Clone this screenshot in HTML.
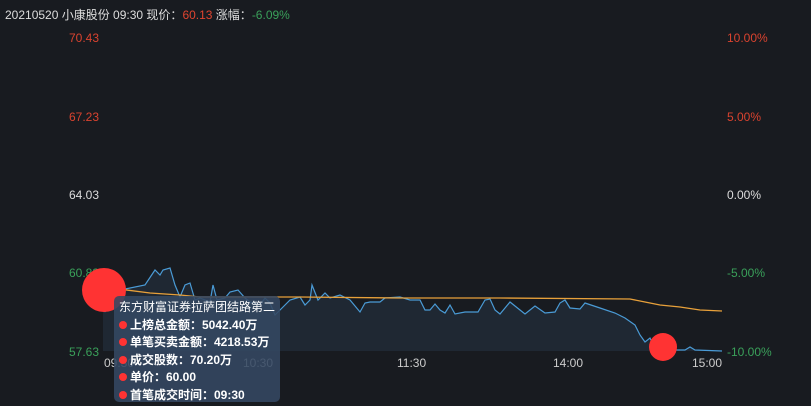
<!DOCTYPE html>
<html><head><meta charset="utf-8"><style>
body{margin:0;background:#181b20;width:811px;height:406px;overflow:hidden;font-family:"Liberation Sans","Noto Sans CJK SC",sans-serif;}
.t{position:absolute;font-size:12px;white-space:nowrap}
.tip{position:absolute;left:114px;top:296px;width:166px;height:106px;background:rgba(52,72,98,0.88);border-radius:5px;color:#fff;font-size:12px;font-weight:bold;line-height:17.5px;padding:3px 0 0 5px;box-sizing:border-box}
.tip span{display:inline-block;width:8px;height:8px;border-radius:50%;background:#ff3333;margin-right:3px}
.tip b{font-weight:normal}
</style></head><body>
<div class="t" style="left:5px;top:6px;color:#ddd">20210520 小康股份 09:30 现价：<span style="color:#e0442f">60.13</span> 涨幅：<span style="color:#3aa05a">-6.09%</span></div>
<div class="t" style="left:69px;top:31px;color:#d9432f">70.43</div>
<div class="t" style="left:69px;top:110px;color:#d9432f">67.23</div>
<div class="t" style="left:69px;top:188px;color:#ddd">64.03</div>
<div class="t" style="left:69px;top:266px;color:#3aa05a">60.83</div>
<div class="t" style="left:69px;top:345px;color:#3aa05a">57.63</div>
<div class="t" style="left:727px;top:31px;color:#d9432f">10.00%</div>
<div class="t" style="left:727px;top:110px;color:#d9432f">5.00%</div>
<div class="t" style="left:727px;top:188px;color:#ddd">0.00%</div>
<div class="t" style="left:727px;top:266px;color:#3aa05a">-5.00%</div>
<div class="t" style="left:727px;top:345px;color:#3aa05a">-10.00%</div>
<div class="t" style="left:104px;top:356px;color:#ccc">09:30</div>
<div class="t" style="left:243px;top:356px;color:#ccc">10:30</div>
<div class="t" style="left:397px;top:356px;color:#ccc">11:30</div>
<div class="t" style="left:553px;top:356px;color:#ccc">14:00</div>
<div class="t" style="left:692px;top:356px;color:#ccc">15:00</div>
<svg width="811" height="406" style="position:absolute;left:0;top:0">
<polygon fill="#1f2833" points="103,351 103,300 105,312 110,292 145,285 155,270 160,275 163,270 170,268 175,285 180,297 185,285 190,283 195,300 200,298 210,302 213,285 217,300 225,298 230,292 238,290 245,298 250,302 260,305 265,298 270,303 275,315 280,310 290,300 300,297 305,305 310,300 312,285 318,300 325,293 330,298 340,295 350,300 360,312 365,303 370,302 380,302 385,298 400,297 410,300 415,300 420,300 425,310 430,310 435,304 440,310 445,313 450,305 455,314 465,312 478,312 485,300 490,299 495,310 500,314 510,302 520,310 525,314 535,306 545,313 555,312 560,303 565,300 570,308 580,309 585,303 600,308 615,313 625,318 635,325 640,335 645,342 650,338 655,348 670,350 685,350 690,347 695,350 722,351"/>
<polyline fill="none" stroke="#4a9bd6" stroke-width="1.2" points="103,300 105,312 110,292 145,285 155,270 160,275 163,270 170,268 175,285 180,297 185,285 190,283 195,300 200,298 210,302 213,285 217,300 225,298 230,292 238,290 245,298 250,302 260,305 265,298 270,303 275,315 280,310 290,300 300,297 305,305 310,300 312,285 318,300 325,293 330,298 340,295 350,300 360,312 365,303 370,302 380,302 385,298 400,297 410,300 415,300 420,300 425,310 430,310 435,304 440,310 445,313 450,305 455,314 465,312 478,312 485,300 490,299 495,310 500,314 510,302 520,310 525,314 535,306 545,313 555,312 560,303 565,300 570,308 580,309 585,303 600,308 615,313 625,318 635,325 640,335 645,342 650,338 655,348 670,350 685,350 690,347 695,350 722,351"/>
<polyline fill="none" stroke="#e8a13a" stroke-width="1.3" points="103,287 150,293 180,295 200,297 300,297 400,298 500,298 630,299 645,302 660,305 680,307 700,310 722,311"/>
<circle cx="104" cy="290" r="22" fill="#ff3333"/>
<circle cx="663" cy="347" r="14" fill="#ff3333"/>
</svg>
<div class="tip"><b>东方财富证券拉萨团结路第二</b><br><span></span>上榜总金额：5042.40万<br><span></span>单笔买卖金额：4218.53万<br><span></span>成交股数：70.20万<br><span></span>单价：60.00<br><span></span>首笔成交时间：09:30</div>
</body></html>
